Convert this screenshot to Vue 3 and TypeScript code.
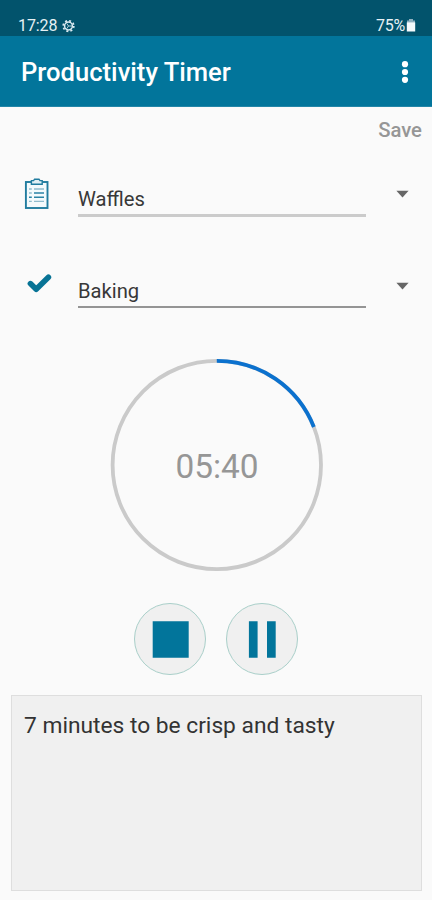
<script setup lang="ts">
import { ref, computed } from 'vue'

interface Field {
  id: 'project' | 'task'
  value: string
}

const fields = ref<Field[]>([
  { id: 'project', value: 'Waffles' },
  { id: 'task', value: 'Baking' },
])

const total = 7 * 60
const remaining = ref(340)
const note = ref('7 minutes to be crisp and tasty')

const radius = 104.2
const circumference = 2 * Math.PI * radius
const clock = computed(() => {
  const pad = (n: number) => String(n).padStart(2, '0')
  return `${pad(Math.floor(remaining.value / 60))}:${pad(remaining.value % 60)}`
})
const arc = computed(() => {
  const length = circumference * (1 - remaining.value / total)
  return `${length} ${circumference - length}`
})
</script>

<template>
  <div class="screen">
    <div class="status">
      <div class="status-group">
        <span class="time">17:28</span>
        <svg class="gear" width="13" height="14" viewBox="0 0 13 14">
          <circle cx="6.5" cy="7" r="3.9" fill="none" stroke="#dcebf2" stroke-width="1.5" />
          <circle cx="6.5" cy="7" r="5.3" fill="none" stroke="#dcebf2" stroke-width="1.7" stroke-dasharray="2 2.16" />
          <path d="M6.5 7L4.8 4.4M6.5 7H9.8M6.5 7L4.8 9.6" fill="none" stroke="#dcebf2" stroke-width="0.8" />
        </svg>
      </div>
      <div class="status-group">
        <span class="percent">75%</span>
        <svg class="battery" width="10" height="13" viewBox="0 0 10 13">
          <path d="M3 0H7V1.4H9V4H1V1.4H3Z" fill="#8fb0bf" />
          <path d="M0.8 3.4H9.2V12.5H0.8Z" fill="#f4fafc" />
        </svg>
      </div>
    </div>

    <header class="appbar">
      <h1>Productivity Timer</h1>
      <svg class="more" width="8" height="24" viewBox="0 0 8 24" fill="#fff">
        <circle cx="4" cy="4.2" r="3.1" />
        <circle cx="4" cy="12" r="3.1" />
        <circle cx="4" cy="19.8" r="3.1" />
      </svg>
    </header>

    <div class="actions"><span>Save</span></div>

    <div v-for="field in fields" :key="field.id" class="field" :class="field.id">
      <div class="lead">
        <svg v-if="field.id === 'project'" width="25" height="32" viewBox="0 0 25 32">
          <rect x="1.9" y="4" width="21.6" height="26" fill="#f4fafc" stroke="#217c9f" stroke-width="1.9" />
          <path d="M7.4 2.6H9.6L10.6 1.2H15L16 2.6H18.2V6.2H7.4Z" fill="#e2f0f5" stroke="#217c9f" stroke-width="1.4" />
          <g fill="none" stroke-width="1.4">
            <path d="M5 11H7.8M10 11H20M5 15H7.8M5 23.4H7.8M10 23.4H20" stroke="#8fbccd" />
            <path d="M10 15H20M5 19.2H7.8M10 19.2H20" stroke="#2b83a5" />
          </g>
        </svg>
        <svg v-else class="check" width="25" height="21" viewBox="0 0 25 21">
          <path d="M3.4 10.6L9.2 16.2L21.4 4.2" fill="none" stroke="#077395" stroke-width="5.6" stroke-linecap="round" stroke-linejoin="round" />
        </svg>
      </div>
      <div class="entry">{{ field.value }}</div>
      <svg class="caret" width="13" height="8" viewBox="0 0 13 8">
        <path d="M0.4 0.8H12.6L6.5 7.4Z" fill="#666" />
      </svg>
    </div>

    <div class="dial">
      <svg width="214" height="214" viewBox="0 0 214 214">
        <circle cx="106.8" cy="107" :r="radius" fill="none" stroke="#cacaca" stroke-width="3.8" />
        <circle
          cx="106.8" cy="107" :r="radius" fill="none" stroke="#0b71ce" stroke-width="3.8"
          :stroke-dasharray="arc" transform="rotate(-90 106.8 107)"
        />
      </svg>
      <span class="clock">{{ clock }}</span>
    </div>

    <div class="controls">
      <button type="button" aria-label="Stop">
        <svg width="37" height="37" viewBox="0 0 37 37"><path d="M0.7 0.2H36.7V36.7H0.7Z" fill="#02759b" /></svg>
      </button>
      <button type="button" aria-label="Pause">
        <svg width="28" height="37" viewBox="0 0 28 37"><path d="M0.9 0.2H9.6V36.7H0.9ZM19 0.2H27.7V36.7H19Z" fill="#02759b" /></svg>
      </button>
    </div>

    <div class="note">{{ note }}</div>
  </div>
</template>

<style>
body {
  margin: 0;
  background: #fafafa;
}
</style>

<style scoped>
.screen {
  box-sizing: border-box;
  width: 432px;
  height: 900px;
  overflow: hidden;
  background: #fafafa;
  font-family: Roboto, 'Liberation Sans', sans-serif;
  display: flex;
  flex-direction: column;
}
.status {
  box-sizing: border-box;
  height: 36px;
  padding: 16px 16px 0 18px;
  background: #02536c;
  color: #e6f1f5;
  display: flex;
  justify-content: space-between;
  font-size: 16px;
  line-height: 20px;
}
.status-group {
  display: flex;
  align-items: center;
}
.time {
  letter-spacing: -0.1px;
}
.gear {
  margin: -1px 0 0 5px;
}
.percent {
  letter-spacing: -0.2px;
}
.battery {
  margin: -2px 0 0 1px;
}
.appbar {
  box-sizing: border-box;
  height: 71px;
  padding: 0 23px 0 21px;
  background: #02759b;
  color: #fff;
  display: flex;
  align-items: center;
  justify-content: space-between;
  border-bottom: 1px solid #2386a8;
}
h1 {
  margin: 1px 0 0;
  font-size: 25.6px;
  font-weight: 500;
  line-height: 30px;
}
.more {
  margin-top: 1px;
}
.actions {
  height: 46px;
  padding: 0 10px;
  display: flex;
  justify-content: flex-end;
  align-items: center;
  color: #969696;
  font-size: 20.3px;
  line-height: 24px;
  font-weight: 500;
}
.field {
  display: flex;
  height: 92px;
}
.lead {
  width: 54px;
  padding: 25px 0 0 24px;
}
.check {
  margin: 3px 0 0 3px;
}
.entry {
  box-sizing: border-box;
  width: 288px;
  height: 64px;
  padding-top: 33px;
  border-bottom: 3px solid #cbcbcb;
  color: #383838;
  font-size: 20.2px;
  line-height: 26px;
}
.task .entry {
  height: 63px;
  border-bottom: 2px solid #949494;
}
.caret {
  margin: 37px 0 0 30px;
}
.dial {
  width: 214px;
  height: 214px;
  margin: 21px auto 0 110px;
  display: grid;
  place-items: center;
}
.dial > * {
  grid-area: 1 / 1;
}
.clock {
  padding-top: 4px;
  color: #969696;
  font-size: 33.4px;
  line-height: 40px;
}
.controls {
  display: flex;
  gap: 20px;
  margin: 31px 0 0 134px;
}
button {
  box-sizing: border-box;
  width: 72px;
  height: 72px;
  padding: 0;
  border: 1px solid #a9cfc9;
  border-radius: 50%;
  background: #f0f0f0;
  display: flex;
  align-items: center;
  justify-content: center;
}
.note {
  box-sizing: border-box;
  width: 411px;
  height: 196px;
  margin: 20px 0 0 11px;
  padding: 16px 12px;
  border: 1px solid #dedede;
  background: #f0f0f0;
  color: #333;
  font-size: 22.75px;
  line-height: 28px;
}
</style>
